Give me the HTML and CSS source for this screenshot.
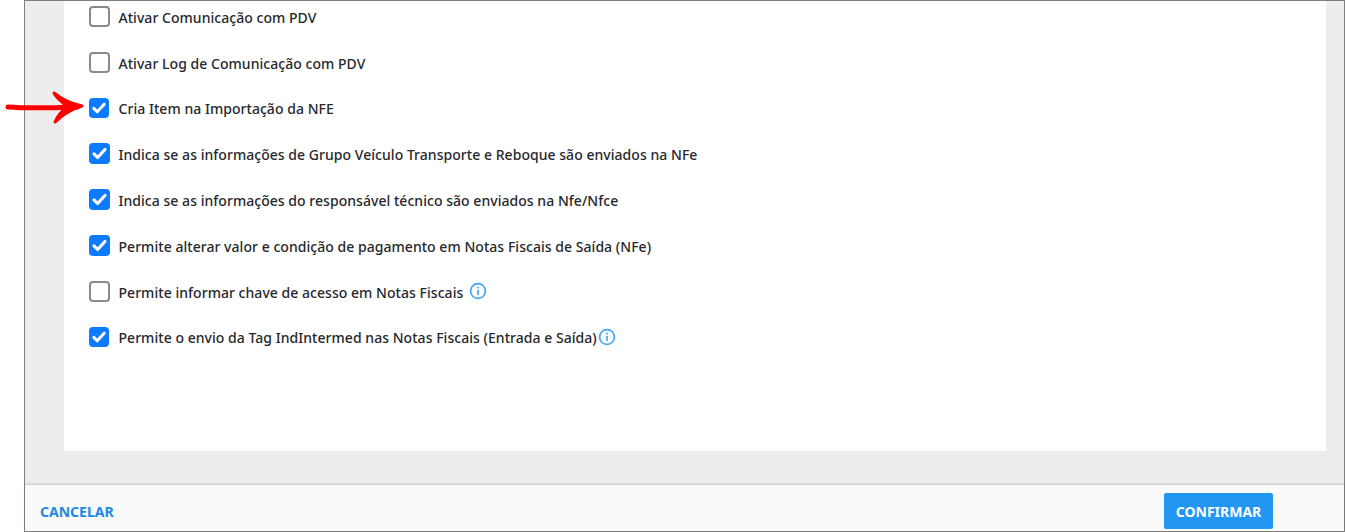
FILE: index.html
```html
<!DOCTYPE html>
<html lang="pt-BR">
<head>
<meta charset="utf-8">
<title>Configurações</title>
<link rel="stylesheet" href="styles.css">
</head>
<body>
<div class="frame">
  <main class="content">
    <section class="card">
      <label class="row"><span class="box"></span><span class="label">Ativar Comunicação com PDV</span></label>
      <label class="row"><span class="box"></span><span class="label">Ativar Log de Comunicação com PDV</span></label>
      <label class="row"><span class="box checked small"><svg viewBox="0 0 20 20" class="tick"><path d="M4.800 10.400l3.400 3.400 7-7.600"/></svg></span><span class="label">Cria Item na Importação da NFE</span></label>
      <label class="row"><span class="box checked"><svg viewBox="0 0 20 20" class="tick"><path d="M4.800 10.400l3.400 3.400 7-7.600"/></svg></span><span class="label">Indica se as informações de Grupo Veículo Transporte e Reboque são enviados na NFe</span></label>
      <label class="row"><span class="box checked"><svg viewBox="0 0 20 20" class="tick"><path d="M4.800 10.400l3.400 3.400 7-7.600"/></svg></span><span class="label">Indica se as informações do responsável técnico são enviados na Nfe/Nfce</span></label>
      <label class="row"><span class="box checked"><svg viewBox="0 0 20 20" class="tick"><path d="M4.800 10.400l3.400 3.400 7-7.600"/></svg></span><span class="label">Permite alterar valor e condição de pagamento em Notas Fiscais de Saída (NFe)</span></label>
      <label class="row"><span class="box"></span><span class="label">Permite informar chave de acesso em Notas Fiscais</span><svg class="info spaced" viewBox="0 0 18 18"><circle cx="9" cy="9" r="7.4"/><path d="M9 8v5M9 4.800v1.800"/></svg></label>
      <label class="row"><span class="box checked small"><svg viewBox="0 0 20 20" class="tick"><path d="M4.800 10.400l3.400 3.400 7-7.600"/></svg></span><span class="label">Permite o envio da Tag IndIntermed nas Notas Fiscais (Entrada e Saída)</span><svg class="info" viewBox="0 0 18 18"><circle cx="9" cy="9" r="7.4"/><path d="M9 8v5M9 4.800v1.800"/></svg></label>
    </section>
  </main>
  <footer class="footer">
    <button class="cancel" type="button">CANCELAR</button>
    <button class="confirm" type="button">CONFIRMAR</button>
  </footer>
</div>
<svg class="arrow" viewBox="0 0 80 36"><path class="shaft" d="M3 18C22 19.500 44 19 72 18"/><path class="head" d="M49 4C55 9 63 14 77 17C65 20 57 27 50 33C53 26 58 21 62 18C58 13 52 10 49 4Z"/></svg>
</body>
</html>
```
FILE: styles.css
```css
* { box-sizing: border-box; }
html, body { margin: 0; height: 100%; background: #fff; overflow: hidden; }
body { font-family: "Noto Sans", "Open Sans", sans-serif; color: #26282c; position: relative; }
.frame {
  margin-left: 24px;
  height: 532px;
  border: 1px solid #7f7f7f;
  background: #ededed;
  display: flex;
  flex-direction: column;
}
.content { flex: 1; min-height: 0; padding: 0 18px 34px 39px; overflow: hidden; }
.card { height: 100%; background: #fff; padding: 0 0 0 25px; overflow: hidden; }
.row { display: flex; align-items: center; height: 45.8px; font-size: 14px; font-weight: 500; letter-spacing: .04px; }
.row:first-child { margin-top: -6.5px; }
.box {
  width: 21px; height: 21px; flex: none;
  border: 2px solid #8a8a8a; border-radius: 4px; background: #fff;
  margin-right: 8.500px;
  position: relative; top: -1px;
}
.box.checked { background: #0d7bff; border: 0; display: flex; }
.box.small { width: 20px; height: 20px; margin-right: 9.500px; }
.tick { width: 100%; height: 100%; fill: none; stroke: #fff; stroke-width: 3; stroke-linecap: round; stroke-linejoin: round; }
.info { width: 18px; height: 18px; margin-left: 1px; fill: none; stroke: #42a5f5; stroke-width: 1.700; flex: none; position: relative; top: -1px; }
.info.spaced { margin-left: 6px; }
.footer {
  height: 46px; flex: none;
  background: #fafafa;
  box-shadow: 0 -1px 2px rgba(0,0,0,.18);
  display: flex; align-items: center; justify-content: space-between;
  padding: 6px 71px 0 15px;
  position: relative;
}
.cancel, .confirm { font-family: inherit; font-size: 14px; font-weight: 700; border: 0; cursor: pointer; }
.cancel { background: none; color: #2089e5; padding: 0; }
.confirm { background: #2196f3; color: #fff; width: 109px; height: 36px; border-radius: 2px; padding: 0; }
.arrow { position: absolute; left: 5px; top: 89px; width: 80px; height: 36px; }
.shaft { fill: none; stroke: #f00; stroke-width: 5; stroke-linecap: round; }
.head { fill: #f00; stroke: #f00; stroke-width: 3; stroke-linejoin: round; }
```
